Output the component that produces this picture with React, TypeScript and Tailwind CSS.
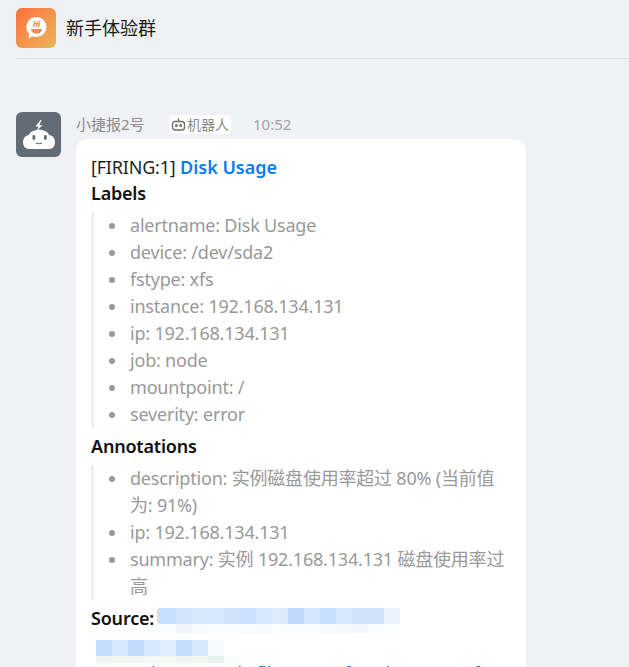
import { ReactNode } from "react";

const font = "font-['Noto_Sans','Noto_Sans_CJK_SC',sans-serif]";

const labels = [
  "alertname: Disk Usage",
  "device: /dev/sda2",
  "fstype: xfs",
  "instance: 192.168.134.131",
  "ip: 192.168.134.131",
  "job: node",
  "mountpoint: /",
  "severity: error",
];

const annotations = [
  "description: 实例磁盘使用率超过 80% (当前值为: 91%)",
  "ip: 192.168.134.131",
  "summary: 实例 192.168.134.131 磁盘使用率过高",
];

const sourceBlur = ["#c6dffe", "#d2e5fe", "#d9e8fe", "#d6e6fe", "#d0e3fe", "#cae0fe", "#d6e7fe", "#deebfe", "#bfdafd", "#d4e6fe", "#c7defe", "#d5e6fe", "#cfe2fd", "#cfe2fd", "#eaf3fe"];
const sourceFade = ["#fbfdff", "#eff5ff", "#f6faff", "#fafcff", "#fafcff", "#f9fbff", "#f9fbff", "#fbfdff", "#fbfdff", "#fbfdff", "#f8fbff", "#f5f9ff", "#f1f6ff", "#fbfdff", "#fdfeff"];
const linkBlur = ["#c3dcfd", "#d6e7fe", "#c1dbfd", "#d6e7fe", "#e1eefe", "#c6defd", "#d9e8fe", "#f7faff"];
const linkFade = ["#eef6f0", "#f0f7f3", "#f2f8f4", "#f4f9f5", "#f3f9f4", "#eef6f0", "#f1f8f2", "#e6f1ee", "#fbfdfc"];

function Quote({ items }: { items: string[] }): ReactNode {
  return (
    <ul className="my-[5px] border-l-[3px] border-[#f0f0f0] pl-[36px] text-[#999999]">
      {items.map((item) => (
        <li key={item} className="relative">
          <span className="absolute left-[-21px] top-[11px] h-[6px] w-[6px] rounded-full bg-[#999999]" />
          {item}
        </li>
      ))}
    </ul>
  );
}

function GroupLogo() {
  return (
    <div className="flex h-10 w-10 items-center justify-center rounded-[6px] bg-gradient-to-br from-[#fb6f3f] to-[#eab55a]">
      <svg width="21" height="22" viewBox="0 0 21 22">
        <path d="M10.500 0a10 10 0 0 1 0 20c-1.500 0-2.800-.3-4-.8L2.500 21.500l.8-4.500A10 10 0 0 1 10.500 0z" fill="#ffffff" />
        <path d="M5 12h11a5.500 4.500 0 0 1-11 0z" fill="#f08a45" />
        <text x="10.500" y="9.500" textAnchor="middle" fontSize="8" fontWeight="700" fontStyle="italic" fill="#f08a45">Hi</text>
      </svg>
    </div>
  );
}

function BotLogo() {
  return (
    <div className="flex h-[45px] w-[45px] items-center justify-center rounded-[6px] bg-[#636b74]">
      <svg width="32" height="30" viewBox="0 0 32 30">
        <path d="M17.500 0L12.500 6.500H15.500L14 10.500L19.500 5H16.500L18.500 0z" fill="#ffffff" />
        <path d="M8 12Q16 7 24 12Q26 14 26 15Q32 16 32 22Q32 29 26 29H6Q0 29 0 22Q0 16 6 15Q6 14 8 12z" fill="#ffffff" />
        <rect x="9.500" y="15" width="2.800" height="5" rx="1.400" fill="#636b74" />
        <rect x="21" y="15" width="2.800" height="5" rx="1.400" fill="#636b74" />
        <path d="M13 23q3 1.500 6 0" stroke="#636b74" strokeWidth="1.200" fill="none" />
      </svg>
    </div>
  );
}

function SmallBot() {
  return (
    <svg width="15" height="15" viewBox="0 0 15 15" fill="none" stroke="#6f6f6f" strokeWidth="1.400">
      <rect x="1.500" y="4.500" width="12" height="8.500" rx="2.800" />
      <path d="M7.500 1.500V4.500" />
      <circle cx="5.300" cy="8.500" r=".8" fill="#6f6f6f" />
      <circle cx="9.700" cy="8.500" r=".8" fill="#6f6f6f" />
    </svg>
  );
}

export default function App() {
  return (
    <div className={`h-[667px] w-[629px] overflow-hidden bg-[#f0f1f4] tracking-[-0.2px] ${font}`}>
      <header className="ml-4 flex h-[59px] items-start gap-[10px] border-b border-[#e0e1e5] pt-2">
        <GroupLogo />
        <span className="pt-[7px] text-[18px] leading-[26px] tracking-normal text-[#1a1a1a]">新手体验群</span>
      </header>
      <div className="flex gap-[15px] pl-4 pt-[53px]">
        <BotLogo />
        <div className="w-[450px]">
          <div className="mb-[3px] flex h-6 items-center text-[15px] tracking-normal text-[#8a8a8a]">
            <span className="w-[93px]">小捷报2号</span>
            <span className="flex h-[19px] w-[62px] items-center justify-center gap-px rounded-[4px] bg-white text-[14px]">
              <SmallBot />
              机器人
            </span>
            <span className="ml-[22px] text-[#a3a3a3]">10:52</span>
          </div>
          <div className="rounded-t-[12px] bg-white pl-[15px] pr-[15px] pt-[15px] text-[18px] leading-[27px] text-[#1f1f1f]">
            <p className="leading-[26px]">
              [FIRING:1] <span className="font-semibold tracking-normal text-[#0a7cf5]">Disk Usage</span>
            </p>
            <p className="font-semibold text-[#111111]">Labels</p>
            <Quote items={labels} />
            <p className="font-semibold text-[#111111]">Annotations</p>
            <Quote items={annotations} />
            <div className="flex items-start">
              <span className="w-[66px] font-semibold text-[#111111]">Source:</span>
              <span className="mt-[3px] h-4 w-[3px] rounded-l-[3px] bg-[#dddddd]" />
              <div className="mt-[3px]">
                <div className="flex">
                  {sourceBlur.map((c, i) => (
                    <span key={i} className="h-4 w-4" style={{ backgroundColor: c }} />
                  ))}
                </div>
                <div className="flex">
                  {sourceFade.map((c, i) => (
                    <span key={i} className="h-[9px] w-4" style={{ backgroundColor: c }} />
                  ))}
                </div>
              </div>
            </div>
            <div className="mt-[7px] pl-[5px]">
              <div className="flex">
                {linkBlur.map((c, i) => (
                  <span key={i} className="h-4 w-4" style={{ backgroundColor: c }} />
                ))}
              </div>
              <div className="flex">
                {linkFade.map((c, i) => (
                  <span key={i} className="h-[7px] w-4" style={{ backgroundColor: c }} />
                ))}
              </div>
            </div>
            <p className="-mt-[3px] whitespace-nowrap pl-[60px] text-[#0a7cf5]">l%2D0mode filesystem fm=cluster %7Bf</p>
          </div>
        </div>
      </div>
    </div>
  );
}
